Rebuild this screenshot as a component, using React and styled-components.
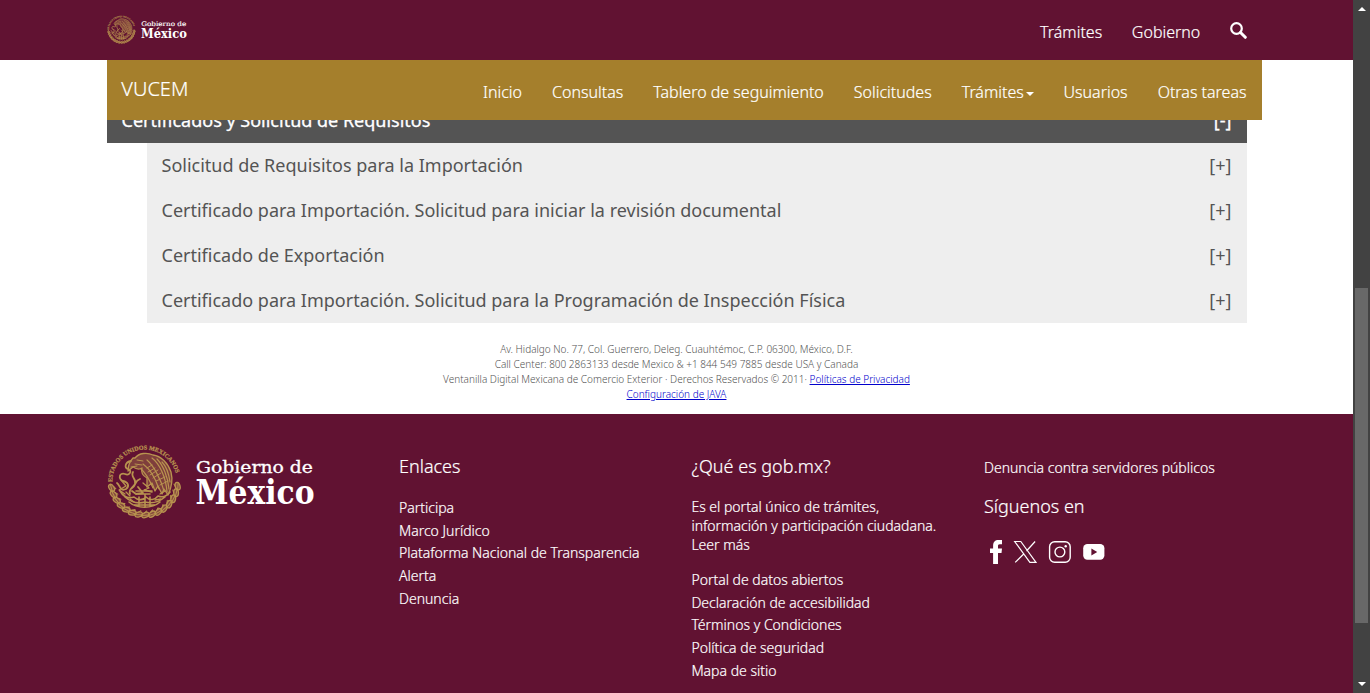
import React from "react";
import styled, { createGlobalStyle } from "styled-components";

const wine = "#611232";
const gold = "#a57f2c";
const crestGold = "#b8934f";

const GlobalStyle = createGlobalStyle`
  * { box-sizing: border-box; }
  html, body, #root { height: 100%; margin: 0; }
  body {
    overflow: hidden;
    background: #fff;
    font-family: "Noto Sans", "Open Sans", sans-serif;
    font-weight: 300;
  }
`;

const Screen = styled.div`
  display: flex;
  height: 693px;
  width: 1370px;
  overflow: hidden;
`;

const Page = styled.div`
  width: 1353px;
  height: 693px;
  display: flex;
  flex-direction: column;
  flex: none;
`;

const TopBar = styled.header`
  height: 60px;
  flex: none;
  background: ${wine};
  display: flex;
  align-items: flex-start;
  padding: 0 106px 0 107px;
`;

const BrandLink = styled.a`
  display: block;
  height: ${(p) => p.$h}px;
  margin-top: ${(p) => p.$top}px;
  svg { display: block; }
`;

const TopNav = styled.nav`
  margin-left: auto;
  display: flex;
  height: 60px;
  align-items: center;
  gap: 29.7px;
  padding-top: 4px;
  color: #fff;
  font-size: 16px;
  -webkit-text-stroke: 0.2px #fff;
`;

const SearchIcon = styled.svg`
  display: block;
  margin-top: -4px;
`;

const SubBar = styled.div`
  height: 60px;
  flex: none;
  width: 1155px;
  margin-left: 107px;
  background: ${gold};
  color: #fff;
  display: flex;
  align-items: center;
  padding: 0 15.5px 0 14.3px;
  -webkit-text-stroke: 0.2px #fff;
`;

const SubBrand = styled.span`
  font-size: 20px;
  line-height: 28px;
  margin-top: -3px;
`;

const SubNav = styled.nav`
  margin-left: auto;
  display: flex;
  align-items: center;
  gap: 30px;
  font-size: 16px;
  padding-top: 4px;
`;

const SubItem = styled.a`
  display: flex;
  align-items: center;
  white-space: nowrap;
`;

const Caret = styled.i`
  margin: 3px -0.8px 0 2.5px;
  border: 4px solid transparent;
  border-top-color: #fff;
  border-bottom: 0;
`;

const Section = styled.div`
  width: 1140px;
  height: 23px;
  flex: none;
  margin-left: 107px;
  overflow: hidden;
  background: #545454;
  color: #fff;
  display: flex;
  align-items: flex-end;
  justify-content: space-between;
  padding: 0 15.5px 0 14.5px;
  font-size: 18px;
  font-weight: 400;
  line-height: 45px;
  -webkit-text-stroke: 0.3px #fff;
`;

const List = styled.div`
  width: 1100px;
  margin-left: 147px;
  flex: none;
  background: #eee;
`;

const Row = styled.div`
  height: 45px;
  padding: 0 15.5px 0 14.5px;
  display: flex;
  justify-content: space-between;
  line-height: 45px;
  font-size: 18px;
  font-weight: 400;
  color: #545454;
`;

const Legal = styled.div`
  height: 91px;
  flex: none;
  padding-top: 19px;
  text-align: center;
  font-size: 10px;
  line-height: 15px;
  color: #545454;
  a { color: #0000cc; text-decoration: underline; }
`;

const Footer = styled.footer`
  flex: 1;
  background: ${wine};
  color: #fff;
  display: grid;
  grid-template-columns: 292px 292.4px 292.6px 1fr;
  padding-left: 107px;
  font-size: 14px;
`;

const Col = styled.div`
  padding-top: ${(p) => p.$top || 0}px;
  -webkit-text-stroke: ${(p) => (p.$top ? "0.2px #fff" : "0")};
`;

const Heading = styled.h5`
  margin: 0;
  font-size: 18px;
  line-height: 20px;
  font-weight: 300;
`;

const Links = styled.ul`
  list-style: none;
  margin: ${(p) => p.$top}px 0 0;
  padding: 0;
  line-height: 22.75px;
  white-space: nowrap;
`;

const Paragraph = styled.p`
  margin: 21px 0 0;
  line-height: 19px;
  white-space: nowrap;
`;

const Report = styled.div`
  line-height: 20px;
  margin-bottom: 18px;
`;

const Socials = styled.div`
  display: flex;
  margin: 24px 0 0 6px;
  svg { display: block; }
`;

const Track = styled.div`
  width: 17px;
  flex: none;
  height: 693px;
  background: #424242;
  display: flex;
  flex-direction: column;
  align-items: center;
  padding-top: 7px;
`;

const Thumb = styled.div`
  width: 13px;
  height: 335px;
  margin: 277px 0 59px;
  background: #686868;
`;

const Arrow = styled.i`
  border: 4px solid transparent;
  border-${(p) => (p.$up ? "bottom" : "top")}-color: #fff;
  border-${(p) => (p.$up ? "top" : "bottom")}: 0;
`;

const leaves = Array.from({ length: 15 }, (_, i) => 8 + i * 11.5);

function Logo({ width, height }) {
  return (
    <svg width={width} height={height} viewBox="0 0 208 75" overflow="visible">
      <defs>
        <path id="crestArc" d="M5.2 38 A32.4 32.4 0 0 1 70 38 L70 44" />
      </defs>
      <g fill="none" stroke={crestGold} strokeWidth="1" strokeLinecap="round" strokeLinejoin="round">
        <text fill={crestGold} stroke={crestGold} strokeWidth=".25" fontFamily="Liberation Serif, serif" fontWeight="700" fontSize="6.1">
          <textPath href="#crestArc">ESTADOS UNIDOS MEXICANOS</textPath>
        </text>
        {leaves.map((a) => (
          <g key={a} transform={`rotate(${a} 37.5 37.5)`}>
            <ellipse cx="71" cy="37.5" rx="2.4" ry="3.9" transform="rotate(-22 71 37.5)" strokeWidth="1.3" fill={crestGold} fillOpacity=".45" />
            <path d="M71 34 L71.5 41 M67 36 l2 2.6" />
          </g>
        ))}
        <path d="M28 14 c4 -5 12 -6 18 -3 c8 1 15 8 18 17 c2 8 0 17 -3 23 l-4 -6 l-2 5 l-4 -8 l-3 5 l-3 -8 l-5 4 l0 -9 c-4 -2 -6 -6 -5 -10 c-3 2 -6 1 -9 -1 l-5 4 c0 -7 3 -11 5 -13z" strokeWidth="1.3" fill={crestGold} fillOpacity=".35" />
        <path d="M40 16 c7 6 14 20 17 31 M45 14 c8 6 14 20 15 34 M50 15 c6 6 11 18 12 30 M36 20 c7 5 13 16 16 25 M34 25 c5 4 9 12 12 19 M55 18 c4 4 7 13 8 20" strokeWidth="1.2" />
        <path d="M30 16 l6 1 m-8 3 l7 1 m-11 2 l6 -1 M40 24 l5 -3 m-4 7 l7 -4 m-5 7 l8 -5 m-5 8 l8 -5 m-5 8 l9 -4 m-5 8 l8 -4" />
        <path d="M24 17 c-6 1 -7 7 -3 8 c5 2 1 7 -3 5 c-6 -2 -7 5 -2 7 c5 1 7 5 3 8 c-6 3 -6 -4 -9 -6 M26 28 c-3 5 4 7 2 12 c-2 4 -7 5 -5 10 M33 35 c-6 2 -3 6 -8 9 M31 43 l5 6 l-7 1 l-4 -3" strokeWidth="1.8" />
        <path d="M13 47 c3 5 8 8 14 6 c4 4 10 3 12 0 c4 4 9 3 12 -1 c5 2 9 0 12 -4 M18 53 c7 6 13 7 20 5 c8 2 14 0 20 -5 M29 47 h16 M31 50 h12 M22 58 c8 7 23 7 31 0 M32 53 v9 M38 51 v12 M43 53 v9 M28 61 h19" strokeWidth="1.6" />
        <path d="M14 36 l5 6 l-7 4 l6 4 M53 50 l5 -3 m-10 9 l6 -1 M23 52 l-4 -4 m8 10 l-4 -3 M36 39 l6 5 l-5 2 l8 2" strokeWidth="1.3" />
      </g>
      <g fill="#fff" stroke="#fff" fontFamily="DejaVu Serif, serif">
        <text x="89" y="29.3" fontSize="16.5" strokeWidth=".3" textLength="117" lengthAdjust="spacingAndGlyphs">Gobierno de</text>
        <text x="88.5" y="59.5" fontSize="34" fontWeight="700" strokeWidth="0" textLength="119" lengthAdjust="spacingAndGlyphs">México</text>
      </g>
    </svg>
  );
}

const menu = ["Inicio", "Consultas", "Tablero de seguimiento", "Solicitudes", "Trámites", "Usuarios", "Otras tareas"];
const rows = [
  "Solicitud de Requisitos para la Importación",
  "Certificado para Importación. Solicitud para iniciar la revisión documental",
  "Certificado de Exportación",
  "Certificado para Importación. Solicitud para la Programación de Inspección Física",
];
const enlaces = ["Participa", "Marco Jurídico", "Plataforma Nacional de Transparencia", "Alerta", "Denuncia"];
const portal = ["Portal de datos abiertos", "Declaración de accesibilidad", "Términos y Condiciones", "Política de seguridad", "Mapa de sitio"];

export default function App() {
  return (
    <Screen>
      <GlobalStyle />
      <Page>
        <TopBar>
          <BrandLink $h={29} $top={15}>
            <Logo width={80} height={29} />
          </BrandLink>
          <TopNav>
            <a>Trámites</a>
            <a>Gobierno</a>
            <SearchIcon width="17" height="17" viewBox="0 0 17 17" fill="none" stroke="#fff">
              <circle cx="6.5" cy="6.5" r="5.3" strokeWidth="2.2" />
              <path d="M10.5 10.5 L15.3 15.3" strokeWidth="3" strokeLinecap="round" />
            </SearchIcon>
          </TopNav>
        </TopBar>
        <SubBar>
          <SubBrand>VUCEM</SubBrand>
          <SubNav>
            {menu.map((m) => (
              <SubItem key={m}>
                {m}
                {m === "Trámites" && <Caret />}
              </SubItem>
            ))}
          </SubNav>
        </SubBar>
        <Section>
          <span>Certificados y Solicitud de Requisitos</span>
          <span>[-]</span>
        </Section>
        <List>
          {rows.map((r) => (
            <Row key={r}>
              <span>{r}</span>
              <span>[+]</span>
            </Row>
          ))}
        </List>
        <Legal>
          <div>Av. Hidalgo No. 77, Col. Guerrero, Deleg. Cuauhtémoc, C.P. 06300, México, D.F.</div>
          <div>Call Center: 800 2863133 desde Mexico &amp; +1 844 549 7885 desde USA y Canada</div>
          <div>
            Ventanilla Digital Mexicana de Comercio Exterior · Derechos Reservados © 2011· <a>Políticas de Privacidad</a>
          </div>
          <div>
            <a>Configuración de JAVA</a>
          </div>
        </Legal>
        <Footer>
          <Col>
            <BrandLink $h={75} $top={30}>
              <Logo width={208} height={75} />
            </BrandLink>
          </Col>
          <Col $top={42}>
            <Heading>Enlaces</Heading>
            <Links $top={20.86}>
              {enlaces.map((l) => (
                <li key={l}>{l}</li>
              ))}
            </Links>
          </Col>
          <Col $top={42}>
            <Heading>¿Qué es gob.mx?</Heading>
            <Paragraph>
              Es el portal único de trámites,
              <br />
              información y participación ciudadana.
              <br />
              Leer más
            </Paragraph>
            <Links $top={14.86}>
              {portal.map((l) => (
                <li key={l}>{l}</li>
              ))}
            </Links>
          </Col>
          <Col $top={44}>
            <Report>Denuncia contra servidores públicos</Report>
            <Heading>Síguenos en</Heading>
            <Socials>
              <svg width="120" height="26" viewBox="0 0 120 26" fill="#fff">
                <path d="M3.1 24 V13 H0 V8.6 H3.1 V5.8 C3.1 2 5 0 8.6 0 H12 V4.2 H9.8 C8.2 4.2 8 4.9 8 6.2 V8.6 H12 L11.5 13 H8 V24 Z" />
                <path d="M24.7 1.5 H30.8 L46 22.4 H39.9 Z M45.1 1.5 L36.5 11 M34.2 13.5 L25.2 22.4" fill="none" stroke="#fff" strokeWidth="1.2" />
                <rect x="59.6" y="1.7" width="20.6" height="20.6" rx="5" fill="none" stroke="#fff" strokeWidth="1.4" />
                <circle cx="69.9" cy="12" r="4.9" fill="none" stroke="#fff" strokeWidth="1.4" />
                <circle cx="75.7" cy="6.2" r="1.2" />
                <rect x="93.2" y="4.1" width="21.2" height="15.7" rx="4.2" />
                <path d="M101.4 8.6 L107.2 12 L101.4 15.4 Z" fill={wine} />
              </svg>
            </Socials>
          </Col>
        </Footer>
      </Page>
      <Track>
        <Arrow $up />
        <Thumb />
        <Arrow />
      </Track>
    </Screen>
  );
}
